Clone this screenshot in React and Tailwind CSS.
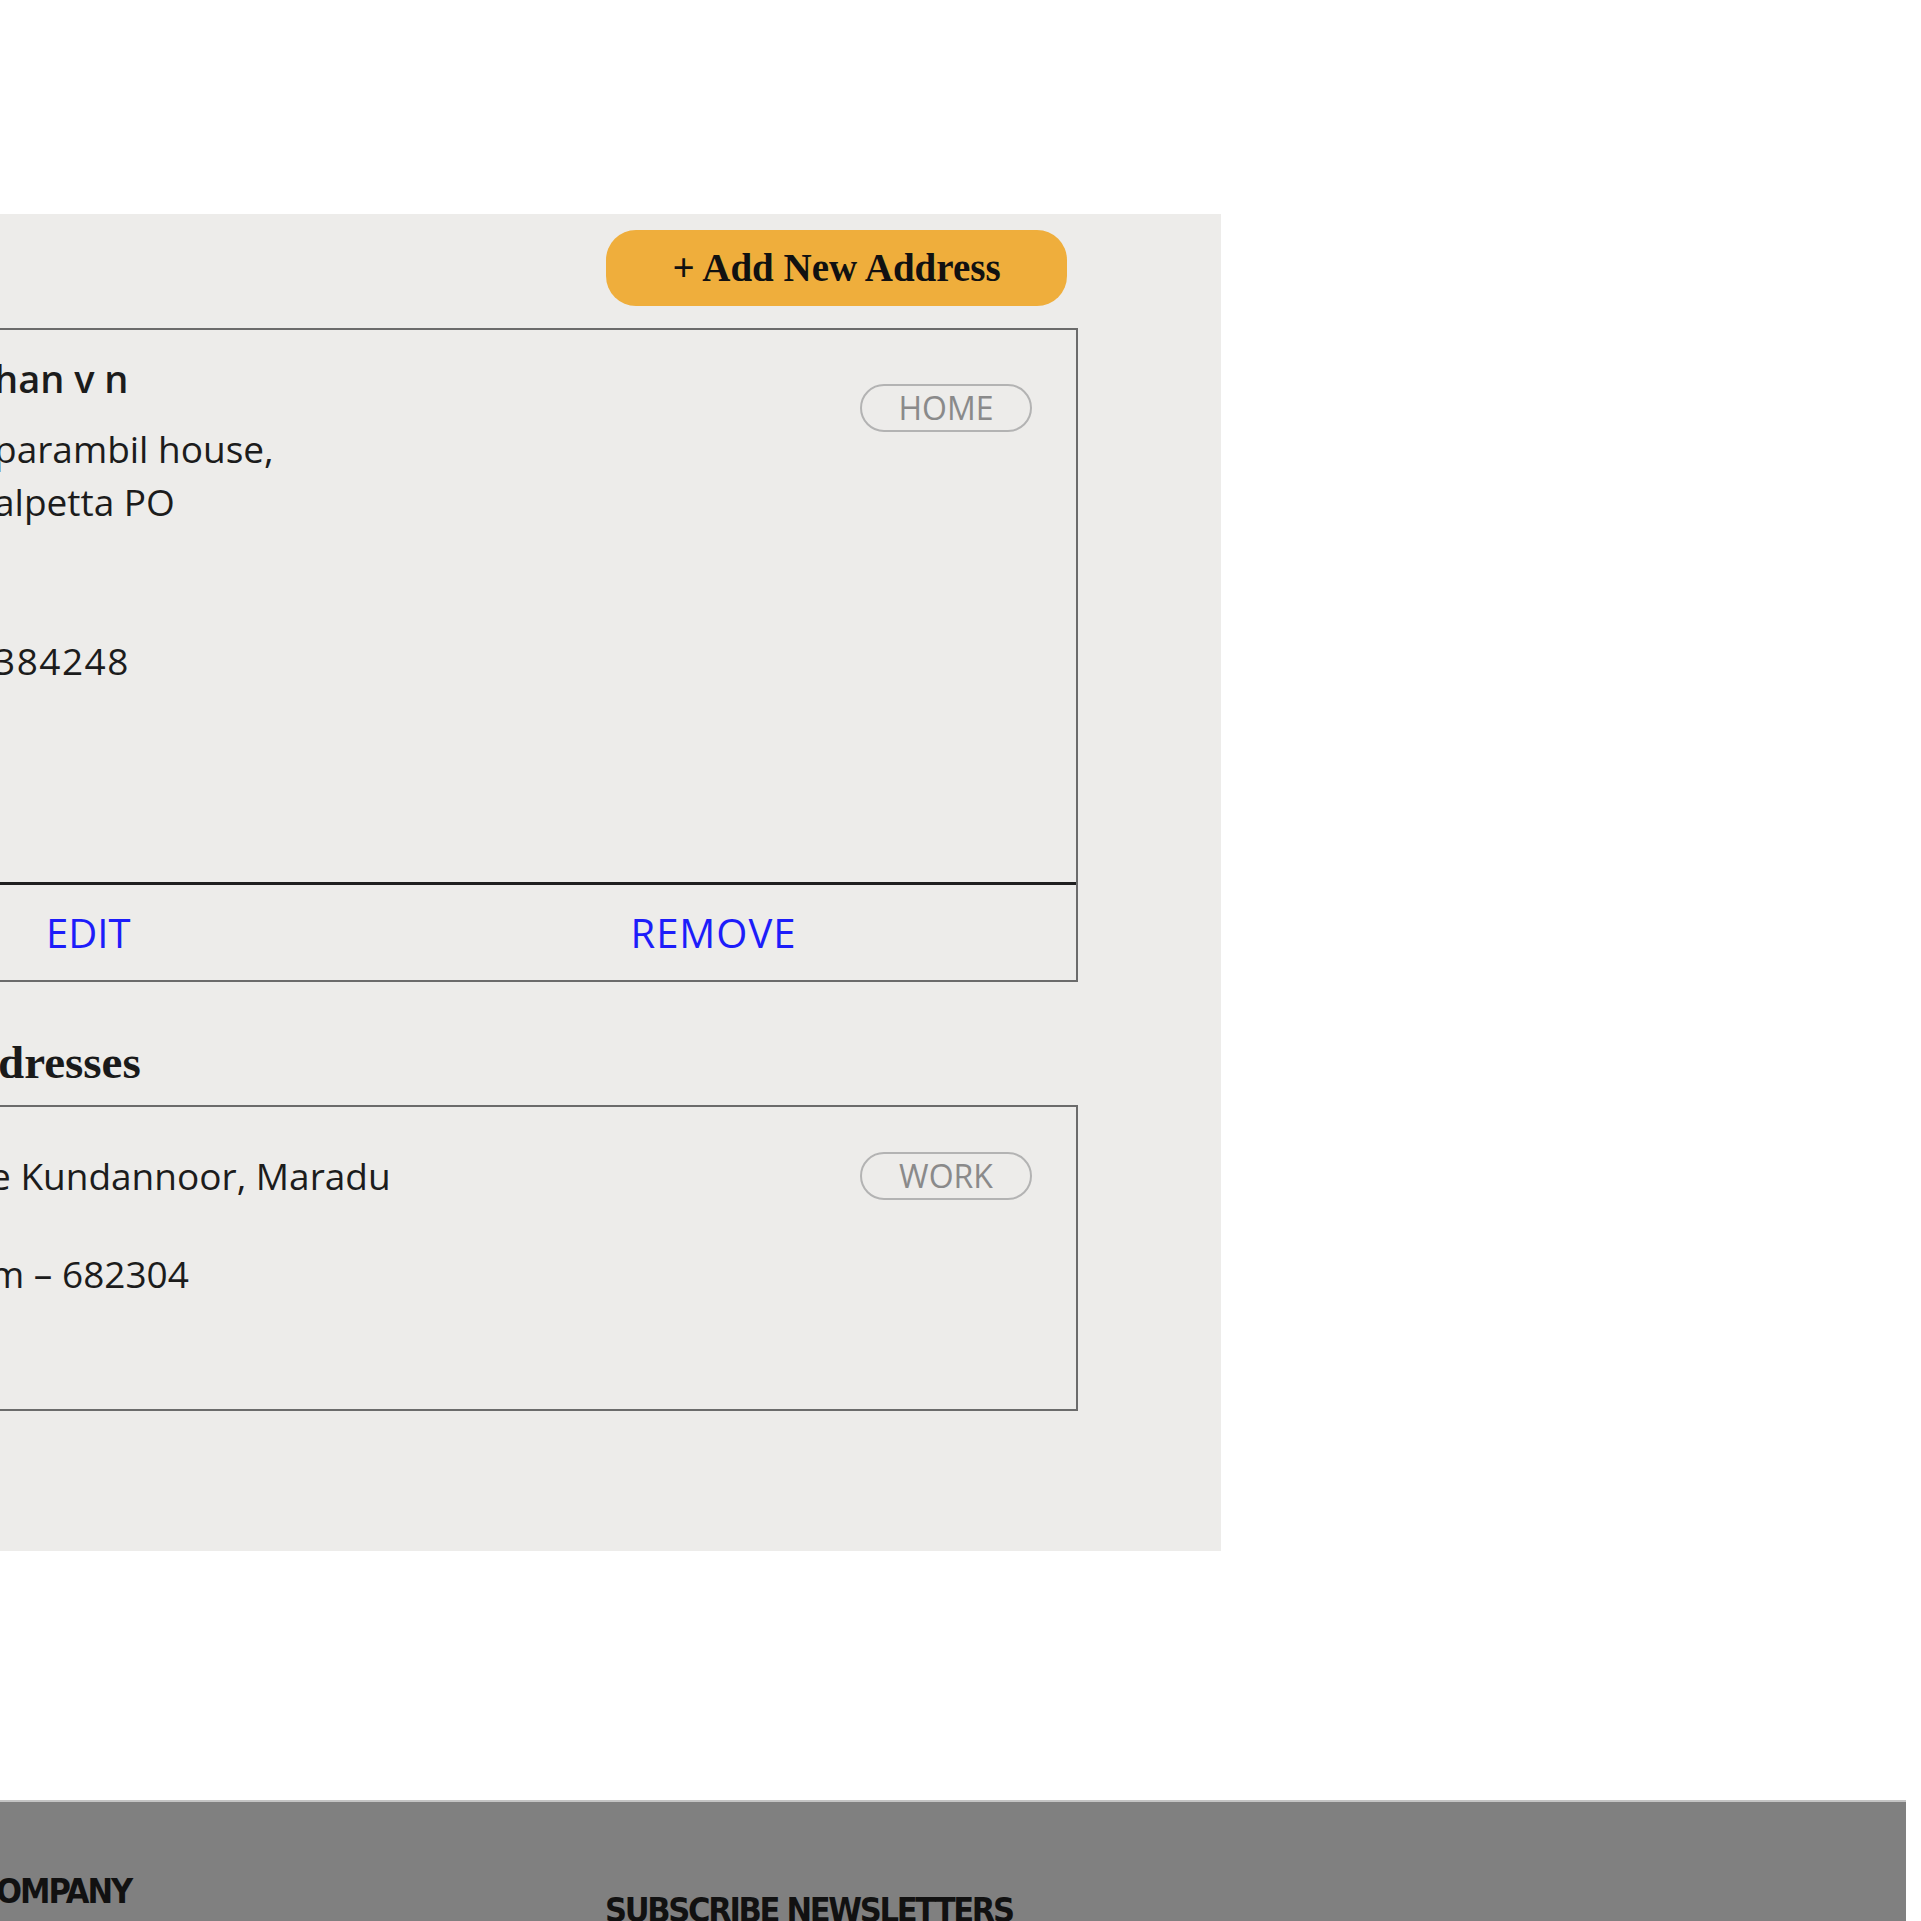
import React from 'react';

const body = "font-['Open_Sans','Noto_Sans',sans-serif]";
const serif = "font-['Liberation_Serif','Times_New_Roman',serif]";
const cond = "font-['DejaVu_Sans_Condensed','DejaVu_Sans',sans-serif]";

const Tag = ({ label, className = '' }) => (
  <span
    className={`flex h-[48px] w-[172px] items-center justify-center rounded-full border-2 border-[#b3b3b3] text-[32px] leading-none text-[#8a8a8a] ${className}`}
  >
    {label}
  </span>
);

const DefaultAddress = () => (
  <div className="w-[1278px] border-2 border-[#6b6b6b]">
    <div className="flex h-[552px] items-start justify-between pl-[192px] pr-[44px] pt-[22px]">
      <div className="flex flex-col text-[37px] leading-[53px] text-[#1c1c1c]">
        <p className="text-[38px] font-semibold">han v n</p>
        <p className="mt-[17px]">parambil house,</p>
        <p>alpetta PO</p>
        <p className="mt-[106px] tracking-[1.5px]">384248</p>
      </div>
      <Tag label="HOME" className="mt-[32px]" />
    </div>
    <div className="flex h-[98px] items-center border-t-[3px] border-[#1f1f1f] pl-[244px] text-[40px] text-[#1d1dfa]">
      <button className="leading-none">EDIT</button>
      <button className="ml-[500px] leading-none tracking-[1px]">REMOVE</button>
    </div>
  </div>
);

const OtherAddress = () => (
  <div className="mt-[13px] w-[1278px] border-2 border-[#6b6b6b]">
    <div className="flex items-start justify-between pb-[109px] pl-[188px] pr-[44px] pt-[42px]">
      <div className="flex flex-col text-[37px] leading-[53px] text-[#1c1c1c]">
        <p>e Kundannoor, Maradu</p>
        <p className="mt-[45px]">m – 682304</p>
      </div>
      <Tag label="WORK" className="mt-[3px]" />
    </div>
  </div>
);

export default function App() {
  return (
    <div className={`h-[1921px] w-full overflow-hidden bg-white ${body}`}>
      <main className="pt-[214px]">
        <section className="ml-[-300px] flex w-[1521px] flex-col bg-[#edecea] pb-[140px] pl-[100px] pr-[143px] pt-4">
          <button
            className={`mr-[11px] h-[76px] w-[461px] self-end rounded-[30px] bg-[#efae3c] text-[39px] font-bold text-[#111] ${serif}`}
          >
            + Add New Address
          </button>
          <div className="mt-[22px]">
            <DefaultAddress />
          </div>
          <h2 className={`mt-[50px] pl-[198px] text-[47px] font-bold leading-[60px] text-[#1a1a1a] ${serif}`}>
            dresses
          </h2>
          <OtherAddress />
        </section>
      </main>

      <footer className={`ml-[-300px] mt-[249px] h-[400px] w-[2206px] border-t-2 border-[#c4c4c4] bg-[#808080] pt-[69px] text-[34px] font-bold leading-[40px] text-[#111] ${cond}`}>
        <div className="flex">
          <div className="w-[905px] pl-[296px]">
            <h3 className="tracking-[-2px]">OMPANY</h3>
          </div>
          <div className="mt-[19px]">
            <h3 className="tracking-[-2.3px]">SUBSCRIBE NEWSLETTERS</h3>
          </div>
        </div>
      </footer>
    </div>
  );
}
